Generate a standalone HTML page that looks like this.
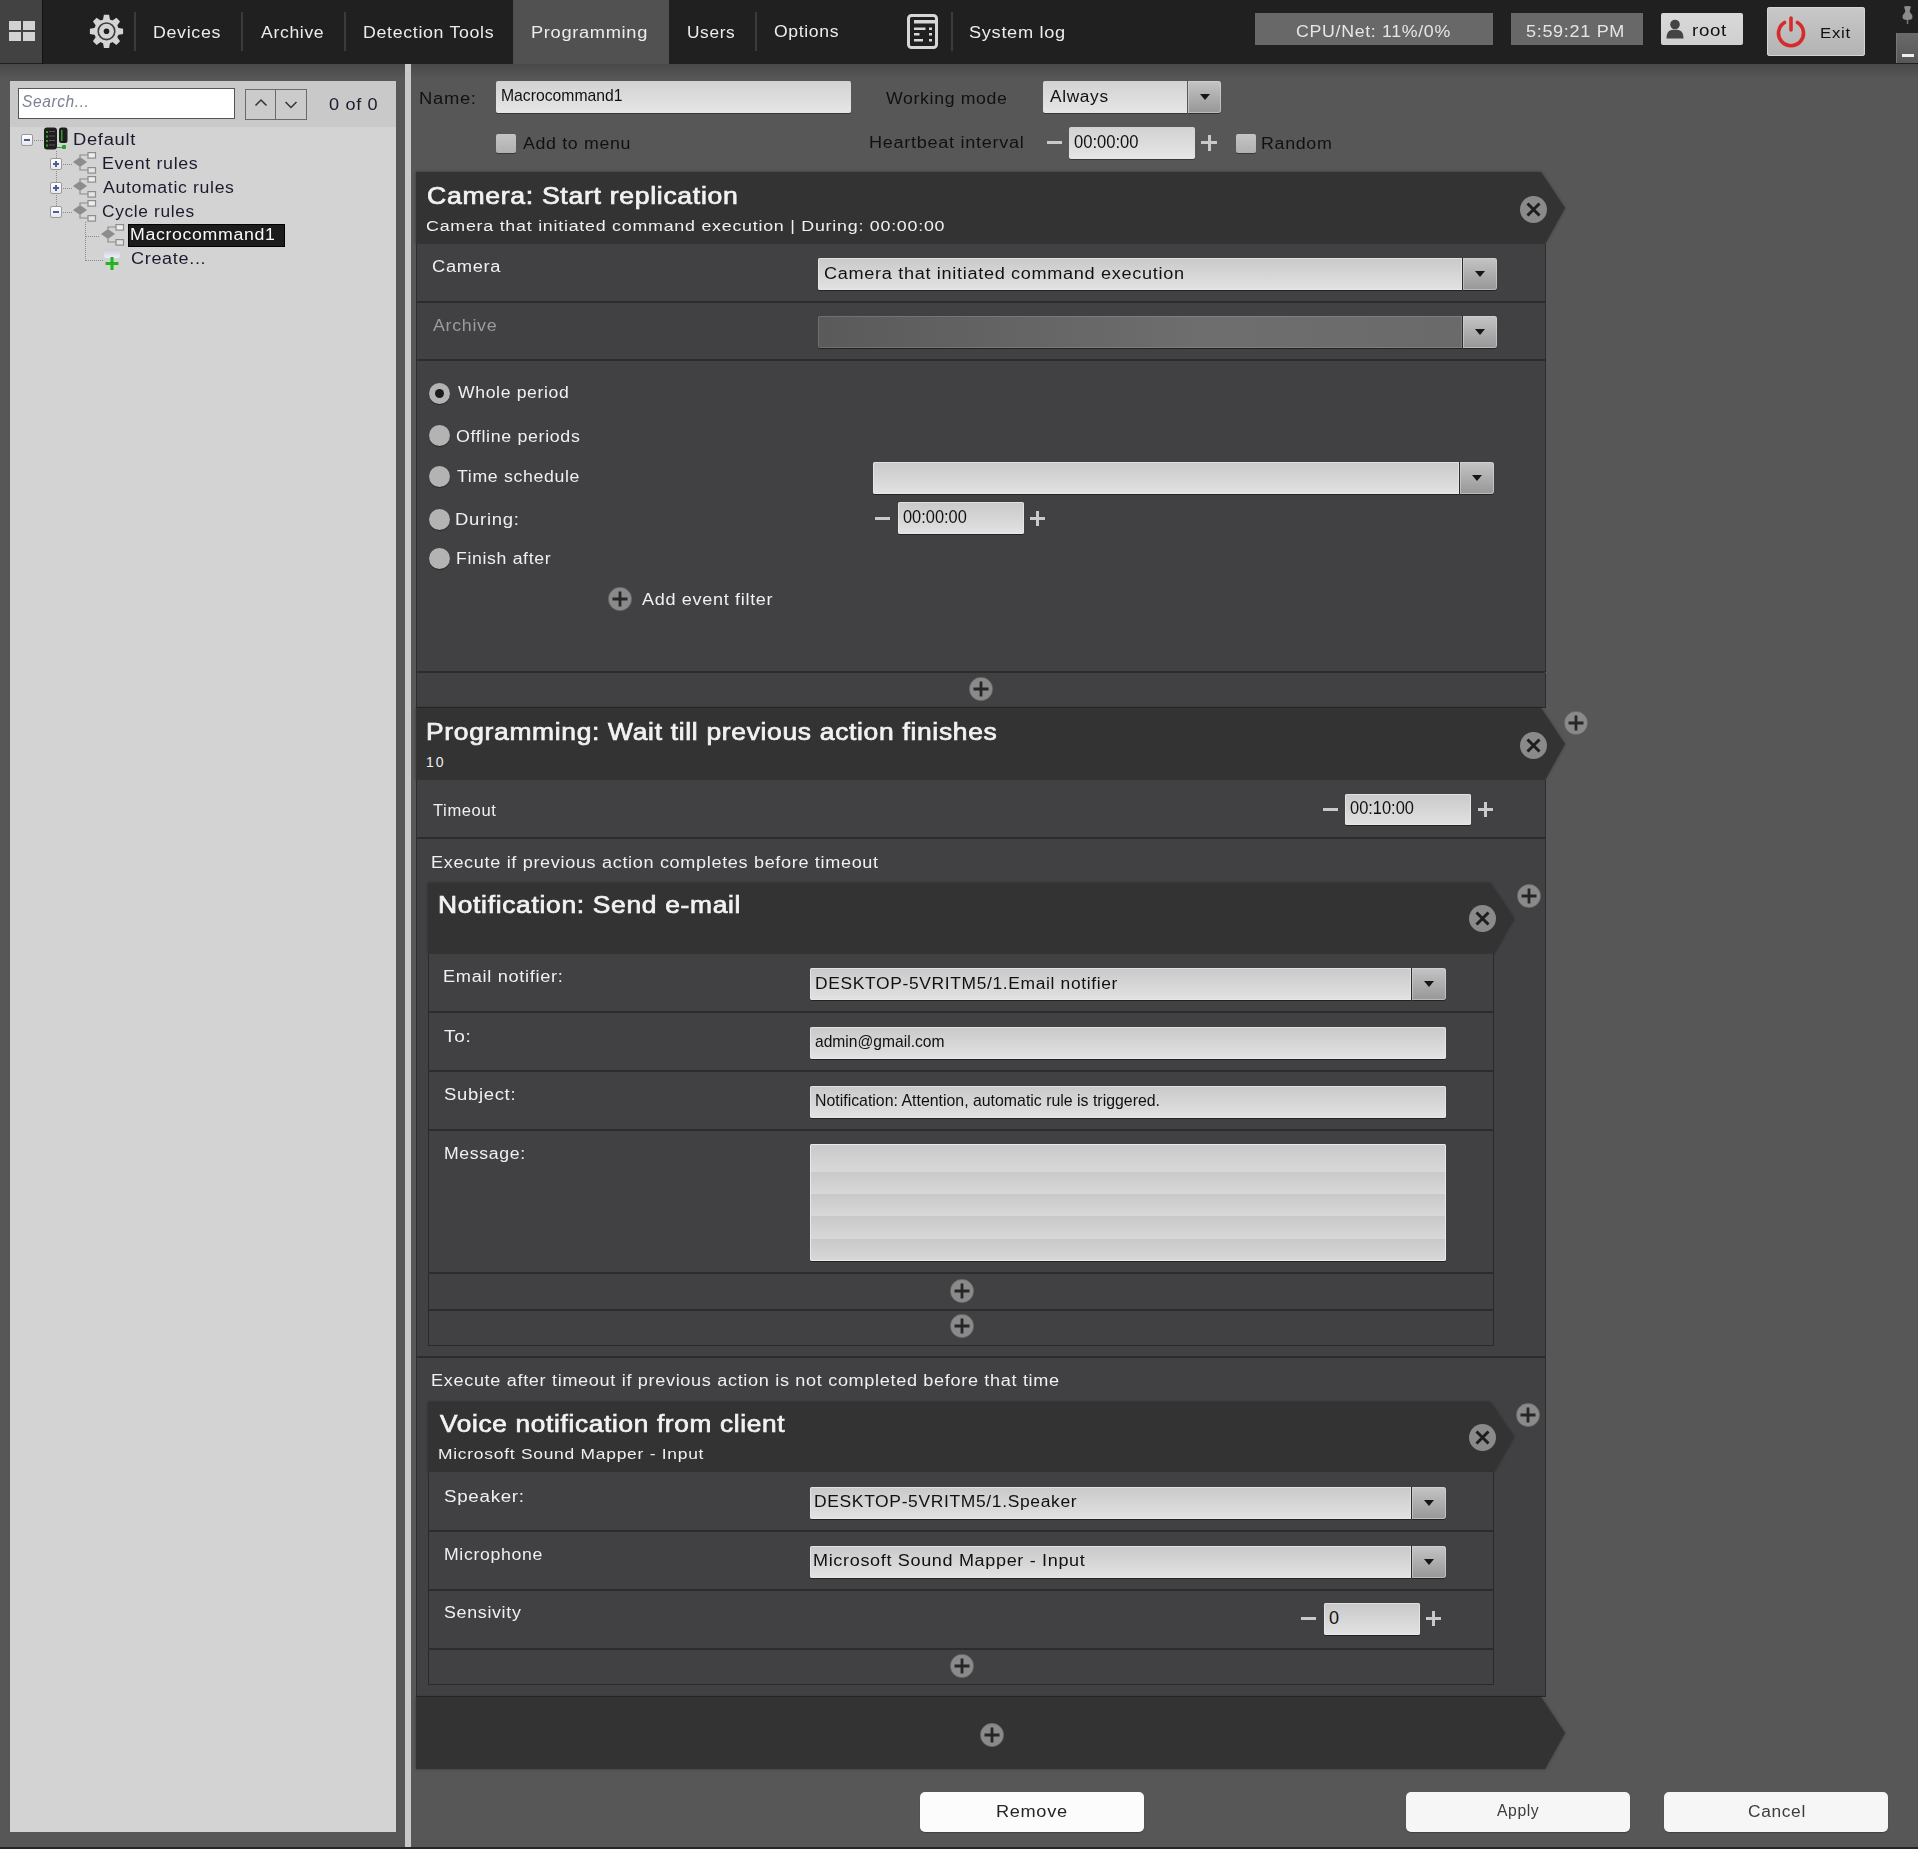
<!DOCTYPE html>
<html><head><meta charset="utf-8"><style>
*{box-sizing:border-box;margin:0;padding:0}
html,body{width:1918px;height:1849px;overflow:hidden;background:#575757;font-family:"Liberation Sans",sans-serif;}
.a{position:absolute}
.tx{position:absolute;white-space:nowrap;line-height:30px}
.t{position:absolute;white-space:nowrap;font-size:16px;letter-spacing:1.5px;line-height:20px;color:#f0f0f0}
.nav{position:absolute;white-space:nowrap;font-size:16px;letter-spacing:1.6px;line-height:20px;color:#ededed}
.dk{position:absolute;white-space:nowrap;font-size:16px;letter-spacing:1.5px;line-height:20px;color:#141414}
.title{position:absolute;white-space:nowrap;font-weight:bold;font-size:23px;letter-spacing:1.5px;color:#f5f5f5;line-height:26px}
.sub{position:absolute;white-space:nowrap;font-size:15px;letter-spacing:2px;color:#f0f0f0;line-height:18px}
.it{position:absolute;white-space:nowrap;font-size:16px;letter-spacing:0px;line-height:20px;color:#111}
.inp{position:absolute;background:linear-gradient(#cbcbcb,#e3e3e3);border-radius:2px;box-shadow:0 1px 0 rgba(0,0,0,.45), inset 0 1px 0 rgba(255,255,255,.35)}
.ddb{position:absolute;background:linear-gradient(#c4c4c4,#979797);border-radius:0 3px 3px 0;box-shadow:0 1px 0 rgba(0,0,0,.45), inset 0 0 0 1px rgba(215,215,215,.55)}
.ddb:after{content:"";position:absolute;left:50%;top:50%;margin-left:-5px;margin-top:-3px;border-left:5px solid transparent;border-right:5px solid transparent;border-top:6px solid #161616}
.btn{position:absolute;background:#f7f7f7;border-radius:4px;color:#222;font-size:16px;letter-spacing:1px;text-align:center;line-height:39px}
.radio{position:absolute;width:21px;height:21px;border-radius:50%;background:#b3b3b3;box-shadow:0 1px 1px rgba(0,0,0,.4)}
.circ{position:absolute;border-radius:50%;background:#8b8b8b}
</style></head><body>
<div class="a" style="left:0px;top:0px;width:1918px;height:64px;background:#202020"></div>
<div class="a" style="left:0px;top:0px;width:42px;height:63px;background:#424242"></div>
<div class="a" style="left:42px;top:0px;width:1px;height:64px;background:#111"></div>
<div class="a" style="left:9px;top:21px;width:12px;height:9px;background:#d2d2d2"></div>
<div class="a" style="left:9px;top:31.5px;width:12px;height:9px;background:#d2d2d2"></div>
<div class="a" style="left:22.5px;top:21px;width:12px;height:9px;background:#d2d2d2"></div>
<div class="a" style="left:22.5px;top:31.5px;width:12px;height:9px;background:#d2d2d2"></div>
<svg class="a" style="left:88px;top:13px" width="37" height="37" viewBox="0 0 37 37">
<defs><path id="tooth" d="M-3.6 -11 L-2.6 -16.6 L2.6 -16.6 L3.6 -11 Z"/></defs>
<g fill="#d4d4d4" transform="translate(18.5 18.3)">
<circle r="12.3"/>
<use href="#tooth"/><use href="#tooth" transform="rotate(45)"/><use href="#tooth" transform="rotate(90)"/><use href="#tooth" transform="rotate(135)"/>
<use href="#tooth" transform="rotate(180)"/><use href="#tooth" transform="rotate(225)"/><use href="#tooth" transform="rotate(270)"/><use href="#tooth" transform="rotate(315)"/>
<circle r="8.3" fill="none" stroke="#3c3c3c" stroke-width="1.6"/>
<circle r="2.8" fill="#1e1e1e"/>
</g>
</svg>
<div class="a" style="left:134px;top:12px;width:2px;height:39px;background:#3b3b3b"></div>
<div class="a" style="left:241px;top:12px;width:2px;height:39px;background:#3b3b3b"></div>
<div class="a" style="left:344px;top:12px;width:2px;height:39px;background:#3b3b3b"></div>
<div class="a" style="left:513px;top:0px;width:156px;height:64px;background:#515151"></div>
<div class="a" style="left:755px;top:12px;width:2px;height:39px;background:#3b3b3b"></div>
<div class="a" style="left:951px;top:12px;width:2px;height:39px;background:#3b3b3b"></div>
<div class="tx" style="left:153.0px;top:17.5px;font:16px &quot;Liberation Sans&quot;;line-height:30px;color:#ececec;letter-spacing:0.6px;transform:scaleX(1.1136);transform-origin:0 0;">Devices</div>
<div class="tx" style="left:261.0px;top:17.5px;font:16px &quot;Liberation Sans&quot;;line-height:30px;color:#ececec;letter-spacing:0.6px;transform:scaleX(1.1);transform-origin:0 0;">Archive</div>
<div class="tx" style="left:362.6px;top:17.5px;font:16px &quot;Liberation Sans&quot;;line-height:30px;color:#ececec;letter-spacing:0.6px;transform:scaleX(1.1112);transform-origin:0 0;">Detection Tools</div>
<div class="tx" style="left:531.2px;top:17.5px;font:16px &quot;Liberation Sans&quot;;line-height:30px;color:#ececec;letter-spacing:0.6px;transform:scaleX(1.14);transform-origin:0 0;">Programming</div>
<div class="tx" style="left:686.7px;top:17.5px;font:16px &quot;Liberation Sans&quot;;line-height:30px;color:#ececec;letter-spacing:0.6px;transform:scaleX(1.0791);transform-origin:0 0;">Users</div>
<div class="tx" style="left:773.8px;top:17.0px;font:16px &quot;Liberation Sans&quot;;line-height:30px;color:#ececec;letter-spacing:0.6px;transform:scaleX(1.0982);transform-origin:0 0;">Options</div>
<div class="tx" style="left:968.9px;top:17.5px;font:16px &quot;Liberation Sans&quot;;line-height:30px;color:#ececec;letter-spacing:0.6px;transform:scaleX(1.1373);transform-origin:0 0;">System log</div>
<svg class="a" style="left:906px;top:14px" width="33" height="35" viewBox="0 0 33 35">
<rect x="2.5" y="1.5" width="28" height="32" rx="3" fill="none" stroke="#d6d6d6" stroke-width="3"/>
<rect x="8" y="6" width="21" height="3.5" fill="#d6d6d6"/>
<rect x="8" y="13.5" width="11.5" height="2.5" fill="#d6d6d6"/><rect x="23" y="13.5" width="3" height="2.5" fill="#d6d6d6"/>
<rect x="8" y="19" width="5.5" height="2.5" fill="#d6d6d6"/><rect x="23" y="19" width="3" height="2.5" fill="#d6d6d6"/>
<rect x="8" y="25" width="9" height="2.5" fill="#d6d6d6"/><rect x="23" y="25" width="3" height="2.5" fill="#d6d6d6"/>
</svg>
<div class="a" style="left:1255px;top:13px;width:238px;height:32px;background:#686868"></div>
<div class="tx" style="left:1296.0px;top:17.2px;font:16px &quot;Liberation Sans&quot;;line-height:30px;color:#e6e6e6;letter-spacing:0.6px;transform:scaleX(1.1109);transform-origin:0 0;">CPU/Net: 11%/0%</div>
<div class="a" style="left:1511px;top:13px;width:132px;height:32px;background:#686868"></div>
<div class="tx" style="left:1526.4px;top:17.2px;font:16px &quot;Liberation Sans&quot;;line-height:30px;color:#e6e6e6;letter-spacing:0.6px;transform:scaleX(1.1282);transform-origin:0 0;">5:59:21 PM</div>
<div class="a" style="left:1661px;top:13px;width:82px;height:32px;background:linear-gradient(#d9d9d9,#cfcfcf);border-radius:2px"></div>
<svg class="a" style="left:1666px;top:19px" width="18" height="20" viewBox="0 0 18 20">
<circle cx="9" cy="5.5" r="4.8" fill="#444"/><path d="M0.5 19.5 C0.5 12 4 10.8 9 10.8 C14 10.8 17.5 12 17.5 19.5 Z" fill="#444"/></svg>
<div class="tx" style="left:1691.6px;top:16.2px;font:16px &quot;Liberation Sans&quot;;line-height:30px;color:#111;letter-spacing:0.6px;transform:scaleX(1.1679);transform-origin:0 0;">root</div>
<div class="a" style="left:1767px;top:7px;width:98px;height:49px;background:linear-gradient(#c8c8c8,#b3b3b3);border-radius:3px;box-shadow:inset 0 0 0 1px #d4d4d4"></div>
<svg class="a" style="left:1774px;top:15px" width="34" height="34" viewBox="0 0 34 34">
<path d="M10.5 7.5 A12.5 12.5 0 1 0 23.5 7.5" fill="none" stroke="#d42c2c" stroke-width="3.6" stroke-linecap="round"/>
<line x1="17" y1="3" x2="17" y2="15" stroke="#d42c2c" stroke-width="3.6" stroke-linecap="round"/></svg>
<div class="tx" style="left:1819.9px;top:18.4px;font:14px &quot;Liberation Sans&quot;;line-height:30px;color:#111;letter-spacing:0.6px;transform:scaleX(1.2);transform-origin:0 0;">Exit</div>
<svg class="a" style="left:1900px;top:5px" width="15" height="20" viewBox="0 0 15 20">
<path d="M4 1.5 Q7.5 0.5 11 1.5 L10 5 Q9 6 10.5 8 Q13 10 12.5 12.5 Q12 15 7.5 15 Q3 15 2.5 12.5 Q2 10 4.5 8 Q6 6 5 5 Z" fill="#8c8c8c"/>
<rect x="6.8" y="15" width="1.4" height="4" fill="#7a7a7a"/></svg>
<div class="a" style="left:1896px;top:33px;width:22px;height:30px;background:linear-gradient(#6a6a6a,#575757);box-shadow:inset 1px 0 0 #777"></div>
<div class="a" style="left:1902px;top:54px;width:12px;height:3px;background:#eee"></div>
<div class="a" style="left:0px;top:64px;width:1918px;height:15px;background:linear-gradient(rgba(0,0,0,.16),rgba(0,0,0,0))"></div>
<div class="a" style="left:10px;top:81px;width:386px;height:1751px;background:#d3d3d3"></div>
<div class="a" style="left:10px;top:81px;width:386px;height:46px;background:#c9c9c9"></div>
<div class="a" style="left:405px;top:64px;width:6px;height:1785px;background:#c9c9c9"></div>
<div class="a" style="left:18px;top:88px;width:217px;height:31px;background:#fff;border:1px solid #555"></div>
<div class="tx" style="left:21.7px;top:86.6px;font:italic 16px &quot;Liberation Sans&quot;;line-height:30px;color:#7d8290;letter-spacing:0.6px;transform:scaleX(0.9712);transform-origin:0 0;">Search...</div>
<div class="a" style="left:245px;top:89px;width:31px;height:31px;background:#cbcbcb;border:1px solid #6a6a6a"></div>
<div class="a" style="left:275px;top:89px;width:32px;height:31px;background:#cbcbcb;border:1px solid #6a6a6a"></div>
<svg class="a" style="left:254px;top:98px" width="14" height="10" viewBox="0 0 14 10"><path d="M1.5 7.5 L7 2 L12.5 7.5" fill="none" stroke="#333" stroke-width="1.5"/></svg>
<svg class="a" style="left:284px;top:100px" width="14" height="10" viewBox="0 0 14 10"><path d="M1.5 2 L7 7.5 L12.5 2" fill="none" stroke="#333" stroke-width="1.5"/></svg>
<div class="tx" style="left:328.7px;top:89.5px;font:16px &quot;Liberation Sans&quot;;line-height:30px;color:#1b1b2e;letter-spacing:0.6px;transform:scaleX(1.131);transform-origin:0 0;">0 of 0</div>
<div class="a" style="left:21px;top:134px;width:12px;height:12px;border:1px solid #9a9a9a;border-radius:2px;background:linear-gradient(#fff,#e8e8e8)"></div>
<div class="a" style="left:24px;top:139px;width:6px;height:2px;background:#4b5b9b"></div>
<div class="a" style="left:34px;top:140px;width:10px;height:1px;background:repeating-linear-gradient(90deg,#8a8a8a 0 1px,transparent 1px 2px)"></div>
<svg class="a" style="left:43px;top:127px" width="26" height="24" viewBox="0 0 26 24">
<rect x="1" y="0.5" width="13" height="22" rx="3" fill="#1e1e1e"/>
<rect x="16" y="0.5" width="8.5" height="15.5" rx="2.5" fill="#1e1e1e"/>
<g fill="#2aa02a"><rect x="3" y="4" width="2" height="2"/><rect x="3" y="8.5" width="2" height="2"/><rect x="3" y="13" width="2" height="2"/><rect x="3" y="17.5" width="2" height="2"/>
<rect x="18" y="3" width="1.5" height="11"/><rect x="19" y="18" width="4" height="4" rx="1"/></g>
<g fill="#555"><rect x="6" y="4" width="6" height="1"/><rect x="6" y="8.5" width="6" height="1"/><rect x="6" y="13" width="6" height="1"/><rect x="6" y="17.5" width="6" height="1"/></g>
<rect x="14" y="20" width="5" height="1" fill="#2aa02a"/>
</svg>
<div class="tx" style="left:72.6px;top:124.5px;font:16px &quot;Liberation Sans&quot;;line-height:30px;color:#1b1b30;letter-spacing:0.6px;transform:scaleX(1.1472);transform-origin:0 0;">Default</div>
<div class="a" style="left:56px;top:151px;width:1px;height:55px;background:repeating-linear-gradient(#8a8a8a 0 1px,transparent 1px 2px)"></div>
<div class="a" style="left:50px;top:158px;width:12px;height:12px;border:1px solid #9a9a9a;border-radius:2px;background:linear-gradient(#fff,#e8e8e8)"></div>
<div class="a" style="left:53px;top:163px;width:6px;height:2px;background:#4b5b9b"></div>
<div class="a" style="left:55px;top:161px;width:2px;height:6px;background:#4b5b9b"></div>
<div class="a" style="left:63px;top:164px;width:10px;height:1px;background:repeating-linear-gradient(90deg,#8a8a8a 0 1px,transparent 1px 2px)"></div>
<svg class="a" style="left:73px;top:152px" width="24" height="22" viewBox="0 0 24 22">
<path d="M0 10 L7 5 L14 10 L7 15 Z" fill="#8c8c8c"/>
<path d="M7 5 V3 H15 M7 15 V18 H15" fill="none" stroke="#8c8c8c" stroke-width="1.2"/>
<rect x="15" y="0.6" width="7.5" height="5.5" fill="#eee" stroke="#8c8c8c" stroke-width="1.2"/>
<rect x="15" y="15.6" width="7.5" height="5.5" fill="#e4e4e4" stroke="#8c8c8c" stroke-width="1.2"/>
</svg>
<div class="tx" style="left:102.2px;top:149.1px;font:16px &quot;Liberation Sans&quot;;line-height:30px;color:#1b1b30;letter-spacing:0.6px;transform:scaleX(1.1131);transform-origin:0 0;">Event rules</div>
<div class="a" style="left:50px;top:182px;width:12px;height:12px;border:1px solid #9a9a9a;border-radius:2px;background:linear-gradient(#fff,#e8e8e8)"></div>
<div class="a" style="left:53px;top:187px;width:6px;height:2px;background:#4b5b9b"></div>
<div class="a" style="left:55px;top:185px;width:2px;height:6px;background:#4b5b9b"></div>
<div class="a" style="left:63px;top:188px;width:10px;height:1px;background:repeating-linear-gradient(90deg,#8a8a8a 0 1px,transparent 1px 2px)"></div>
<svg class="a" style="left:73px;top:176px" width="24" height="22" viewBox="0 0 24 22">
<path d="M0 10 L7 5 L14 10 L7 15 Z" fill="#8c8c8c"/>
<path d="M7 5 V3 H15 M7 15 V18 H15" fill="none" stroke="#8c8c8c" stroke-width="1.2"/>
<rect x="15" y="0.6" width="7.5" height="5.5" fill="#eee" stroke="#8c8c8c" stroke-width="1.2"/>
<rect x="15" y="15.6" width="7.5" height="5.5" fill="#e4e4e4" stroke="#8c8c8c" stroke-width="1.2"/>
</svg>
<div class="tx" style="left:103.2px;top:173.2px;font:16px &quot;Liberation Sans&quot;;line-height:30px;color:#1b1b30;letter-spacing:0.6px;transform:scaleX(1.1034);transform-origin:0 0;">Automatic rules</div>
<div class="a" style="left:50px;top:206px;width:12px;height:12px;border:1px solid #9a9a9a;border-radius:2px;background:linear-gradient(#fff,#e8e8e8)"></div>
<div class="a" style="left:53px;top:211px;width:6px;height:2px;background:#4b5b9b"></div>
<div class="a" style="left:63px;top:212px;width:10px;height:1px;background:repeating-linear-gradient(90deg,#8a8a8a 0 1px,transparent 1px 2px)"></div>
<svg class="a" style="left:73px;top:200px" width="24" height="22" viewBox="0 0 24 22">
<path d="M0 10 L7 5 L14 10 L7 15 Z" fill="#8c8c8c"/>
<path d="M7 5 V3 H15 M7 15 V18 H15" fill="none" stroke="#8c8c8c" stroke-width="1.2"/>
<rect x="15" y="0.6" width="7.5" height="5.5" fill="#eee" stroke="#8c8c8c" stroke-width="1.2"/>
<rect x="15" y="15.6" width="7.5" height="5.5" fill="#e4e4e4" stroke="#8c8c8c" stroke-width="1.2"/>
</svg>
<div class="tx" style="left:102.2px;top:197.3px;font:16px &quot;Liberation Sans&quot;;line-height:30px;color:#1b1b30;letter-spacing:0.6px;transform:scaleX(1.0821);transform-origin:0 0;">Cycle rules</div>
<div class="a" style="left:85px;top:222px;width:1px;height:39px;background:repeating-linear-gradient(#8a8a8a 0 1px,transparent 1px 2px)"></div>
<div class="a" style="left:86px;top:236px;width:14px;height:1px;background:repeating-linear-gradient(90deg,#8a8a8a 0 1px,transparent 1px 2px)"></div>
<svg class="a" style="left:101px;top:224px" width="24" height="22" viewBox="0 0 24 22">
<path d="M0 10 L7 5 L14 10 L7 15 Z" fill="#8c8c8c"/>
<path d="M7 5 V3 H15 M7 15 V18 H15" fill="none" stroke="#8c8c8c" stroke-width="1.2"/>
<rect x="15" y="0.6" width="7.5" height="5.5" fill="#eee" stroke="#8c8c8c" stroke-width="1.2"/>
<rect x="15" y="15.6" width="7.5" height="5.5" fill="#e4e4e4" stroke="#8c8c8c" stroke-width="1.2"/>
</svg>
<div class="a" style="left:128px;top:224px;width:157px;height:23px;background:#1c1c1c;box-shadow:inset 0 0 0 1px #000"></div>
<div class="tx" style="left:130.4px;top:219.7px;font:16px &quot;Liberation Sans&quot;;line-height:30px;color:#fafafa;letter-spacing:0.6px;transform:scaleX(1.107);transform-origin:0 0;">Macrocommand1</div>
<div class="a" style="left:86px;top:260px;width:18px;height:1px;background:repeating-linear-gradient(90deg,#8a8a8a 0 1px,transparent 1px 2px)"></div>
<div class="a" style="left:104px;top:249px;width:16px;height:9px;background:linear-gradient(#c9cbd6,#eef0f8);border-radius:2px"></div>
<svg class="a" style="left:105px;top:257px" width="14" height="13" viewBox="0 0 14 13"><path d="M5.5 0h3v5h5v3h-5v5h-3v-5h-5v-3h5z" fill="#1fb51f"/></svg>
<div class="tx" style="left:131.0px;top:244.3px;font:16px &quot;Liberation Sans&quot;;line-height:30px;color:#1b1b30;letter-spacing:0.6px;transform:scaleX(1.1281);transform-origin:0 0;">Create...</div>
<div class="tx" style="left:419.0px;top:83.8px;font:16px &quot;Liberation Sans&quot;;line-height:30px;color:#111;letter-spacing:0.6px;transform:scaleX(1.1489);transform-origin:0 0;">Name:</div>
<div class="a" style="left:496px;top:81px;width:355px;height:32px;background:linear-gradient(#d2d2d2,#e6e6e6);border-radius:2px;box-shadow:0 1px 0 rgba(0,0,0,.35)"></div>
<div class="tx" style="left:501.3px;top:81.0px;font:17px &quot;Liberation Sans&quot;;line-height:30px;color:#111;letter-spacing:0px;transform:scaleX(0.9248);transform-origin:0 0;">Macrocommand1</div>
<div class="tx" style="left:886.4px;top:83.7px;font:16px &quot;Liberation Sans&quot;;line-height:30px;color:#111;letter-spacing:0.6px;transform:scaleX(1.1046);transform-origin:0 0;">Working mode</div>
<div class="a" style="left:1043px;top:81px;width:144px;height:32px;background:linear-gradient(#d2d2d2,#e6e6e6);border-radius:2px 0 0 2px;box-shadow:0 1px 0 rgba(0,0,0,.35)"></div>
<div class="tx" style="left:1049.9px;top:82.4px;font:16px &quot;Liberation Sans&quot;;line-height:30px;color:#111;letter-spacing:0.6px;transform:scaleX(1.0811);transform-origin:0 0;">Always</div>
<div class="ddb" style="left:1188px;top:81px;width:33px;height:32px"></div>
<div class="a" style="left:496px;top:134px;width:20px;height:19px;background:linear-gradient(#c4c4c4,#b0b0b0);border-radius:2px;box-shadow:0 1px 0 rgba(0,0,0,.35)"></div>
<div class="tx" style="left:523.4px;top:129.2px;font:16px &quot;Liberation Sans&quot;;line-height:30px;color:#111;letter-spacing:0.6px;transform:scaleX(1.1104);transform-origin:0 0;">Add to menu</div>
<div class="tx" style="left:868.8px;top:128.0px;font:16px &quot;Liberation Sans&quot;;line-height:30px;color:#111;letter-spacing:0.6px;transform:scaleX(1.1333);transform-origin:0 0;">Heartbeat interval</div>
<div class="a" style="left:1047px;top:141px;width:15px;height:3px;background:#c9c9c9"></div>
<div class="a" style="left:1069px;top:127px;width:126px;height:32px;background:linear-gradient(#d2d2d2,#e6e6e6);border-radius:2px;box-shadow:0 1px 0 rgba(0,0,0,.35)"></div>
<div class="tx" style="left:1073.6px;top:127.3px;font:18px &quot;Liberation Sans&quot;;line-height:30px;color:#111;letter-spacing:0px;transform:scaleX(0.9206);transform-origin:0 0;">00:00:00</div>
<div class="a" style="left:1201px;top:141px;width:16px;height:3px;background:#c9c9c9"></div>
<div class="a" style="left:1207.5px;top:134.5px;width:3px;height:16px;background:#c9c9c9"></div>
<div class="a" style="left:1236px;top:134px;width:20px;height:19px;background:linear-gradient(#c4c4c4,#b0b0b0);border-radius:2px;box-shadow:0 1px 0 rgba(0,0,0,.35)"></div>
<div class="tx" style="left:1261.3px;top:128.8px;font:16px &quot;Liberation Sans&quot;;line-height:30px;color:#111;letter-spacing:0.6px;transform:scaleX(1.1145);transform-origin:0 0;">Random</div>
<svg class="a" style="left:416px;top:172px;overflow:visible" width="1153" height="72" viewBox="0 0 1153 72"><path d="M0 0 H1125 L1149 36.0 L1129 72 H0 Z" fill="#333333" style="filter:drop-shadow(0 0 1.5px rgba(0,0,0,.35))"/></svg>
<div class="tx" style="left:427.3px;top:181.2px;font:23px &quot;Liberation Sans&quot;;line-height:30px;color:#f2f2f2;letter-spacing:0.6px;transform:scaleX(1.1564);transform-origin:0 0;-webkit-text-stroke:0.7px #f2f2f2;">Camera: Start replication</div>
<div class="tx" style="left:426.4px;top:211.2px;font:14px &quot;Liberation Sans&quot;;line-height:30px;color:#f0f0f0;letter-spacing:0.6px;transform:scaleX(1.2724);transform-origin:0 0;">Camera that initiated command execution | During: 00:00:00</div>
<svg class="a" style="left:1518.5px;top:194.5px" width="29.0" height="29.0" viewBox="0 0 29.0 29.0"><circle cx="14.5" cy="14.5" r="13.5" fill="#8a8a8a"/><path d="M8.5 8.5 L20.5 20.5 M20.5 8.5 L8.5 20.5" stroke="#1e1e1e" stroke-width="3"/></svg>
<div class="a" style="left:416px;top:244px;width:1130px;height:428px;background:#414143;border-left:1px solid #2d2d30;border-right:1px solid #2d2d30"></div>
<div class="tx" style="left:431.5px;top:252.4px;font:16px &quot;Liberation Sans&quot;;line-height:30px;color:#f0f0f0;letter-spacing:0.6px;transform:scaleX(1.1441);transform-origin:0 0;">Camera</div>
<div class="a" style="left:1461px;top:258px;width:2px;height:32px;background:#2c2c2c"></div>
<div class="a" style="left:818px;top:258px;width:644px;height:32px;background:linear-gradient(#c9c9c9,#e2e2e2);border-radius:2px 0 0 2px;box-shadow:0 1px 0 rgba(0,0,0,.45), inset 0 0 0 1px rgba(235,235,235,.7)"></div>
<div class="ddb" style="left:1463px;top:258px;width:34px;height:32px"></div>
<div class="tx" style="left:823.6px;top:258.5px;font:16px &quot;Liberation Sans&quot;;line-height:30px;color:#111;letter-spacing:0.6px;transform:scaleX(1.132);transform-origin:0 0;">Camera that initiated command execution</div>
<div class="a" style="left:416px;top:301px;width:1129px;height:2px;background:#2c2c2f"></div>
<div class="tx" style="left:432.5px;top:310.8px;font:16px &quot;Liberation Sans&quot;;line-height:30px;color:#9c9c9c;letter-spacing:0.6px;transform:scaleX(1.1161);transform-origin:0 0;">Archive</div>
<div class="a" style="left:1461px;top:316px;width:2px;height:32px;background:#2c2c2c"></div>
<div class="a" style="left:818px;top:316px;width:644px;height:32px;background:linear-gradient(90deg,#5a5a5a,#6e6e6e 60%,#6a6a6a);border-radius:2px 0 0 2px;box-shadow:0 1px 0 rgba(0,0,0,.45), inset 0 0 0 1px rgba(235,235,235,.15)"></div>
<div class="ddb" style="left:1463px;top:316px;width:34px;height:32px"></div>
<div class="a" style="left:416px;top:359px;width:1129px;height:2px;background:#2c2c2f"></div>
<div class="radio" style="left:429px;top:383px"></div>
<div class="a" style="left:435px;top:389px;width:9px;height:9px;background:#1c1c1c;border-radius:50%"></div>
<div class="tx" style="left:457.6px;top:378.2px;font:16px &quot;Liberation Sans&quot;;line-height:30px;color:#f0f0f0;letter-spacing:0.6px;transform:scaleX(1.098);transform-origin:0 0;">Whole period</div>
<div class="radio" style="left:429px;top:425px"></div>
<div class="tx" style="left:455.9px;top:421.5px;font:16px &quot;Liberation Sans&quot;;line-height:30px;color:#f0f0f0;letter-spacing:0.6px;transform:scaleX(1.1127);transform-origin:0 0;">Offline periods</div>
<div class="radio" style="left:429px;top:466px"></div>
<div class="tx" style="left:456.6px;top:461.5px;font:16px &quot;Liberation Sans&quot;;line-height:30px;color:#f0f0f0;letter-spacing:0.6px;transform:scaleX(1.1055);transform-origin:0 0;">Time schedule</div>
<div class="radio" style="left:429px;top:509px"></div>
<div class="tx" style="left:454.9px;top:504.8px;font:16px &quot;Liberation Sans&quot;;line-height:30px;color:#f0f0f0;letter-spacing:0.6px;transform:scaleX(1.1566);transform-origin:0 0;">During:</div>
<div class="radio" style="left:429px;top:548px"></div>
<div class="tx" style="left:455.9px;top:543.7px;font:16px &quot;Liberation Sans&quot;;line-height:30px;color:#f0f0f0;letter-spacing:0.6px;transform:scaleX(1.1035);transform-origin:0 0;">Finish after</div>
<div class="a" style="left:1458px;top:462px;width:2px;height:32px;background:#2c2c2c"></div>
<div class="a" style="left:873px;top:462px;width:586px;height:32px;background:linear-gradient(#c9c9c9,#e2e2e2);border-radius:2px 0 0 2px;box-shadow:0 1px 0 rgba(0,0,0,.45), inset 0 0 0 1px rgba(235,235,235,.7)"></div>
<div class="ddb" style="left:1460px;top:462px;width:34px;height:32px"></div>
<div class="a" style="left:875px;top:517px;width:15px;height:3px;background:#c9c9c9"></div>
<div class="a" style="left:1030px;top:517px;width:15px;height:3px;background:#c9c9c9"></div>
<div class="a" style="left:1036px;top:511px;width:3px;height:15px;background:#c9c9c9"></div>
<div class="a" style="left:898px;top:502px;width:126px;height:32px;background:linear-gradient(#c9c9c9,#e2e2e2);border-radius:2px;box-shadow:0 1px 0 rgba(0,0,0,.45), inset 0 0 0 1px rgba(235,235,235,.7)"></div>
<div class="tx" style="left:903.3px;top:501.7px;font:18px &quot;Liberation Sans&quot;;line-height:30px;color:#111;letter-spacing:0px;transform:scaleX(0.9103);transform-origin:0 0;">00:00:00</div>
<svg class="a" style="left:606.7px;top:585.5px" width="26" height="26" viewBox="0 0 26 26"><circle cx="13" cy="13" r="11.7" fill="#8a8a8a" stroke="#5a5a5a" stroke-width="0.6"/><path d="M5.5 13 H20.5 M13 5.5 V20.5" stroke="#262626" stroke-width="2.8"/></svg>
<div class="tx" style="left:641.6px;top:585.0px;font:16px &quot;Liberation Sans&quot;;line-height:30px;color:#f0f0f0;letter-spacing:0.6px;transform:scaleX(1.1284);transform-origin:0 0;">Add event filter</div>
<div class="a" style="left:416px;top:671px;width:1129px;height:2px;background:#2c2c2f"></div>
<div class="a" style="left:416px;top:673px;width:1130px;height:35px;background:#414143;border-left:1px solid #2d2d30;border-right:1px solid #2d2d30;border-bottom:1px solid #2b2b2e"></div>
<svg class="a" style="left:968px;top:676px" width="26" height="26" viewBox="0 0 26 26"><circle cx="13" cy="13" r="11.7" fill="#8a8a8a" stroke="#5a5a5a" stroke-width="0.6"/><path d="M5.5 13 H20.5 M13 5.5 V20.5" stroke="#262626" stroke-width="2.8"/></svg>
<svg class="a" style="left:416px;top:708px;overflow:visible" width="1153" height="72" viewBox="0 0 1153 72"><path d="M0 0 H1125 L1149 36.0 L1129 72 H0 Z" fill="#333333" style="filter:drop-shadow(0 0 1.5px rgba(0,0,0,.35))"/></svg>
<div class="tx" style="left:425.8px;top:716.9px;font:23px &quot;Liberation Sans&quot;;line-height:30px;color:#f2f2f2;letter-spacing:0.6px;transform:scaleX(1.148);transform-origin:0 0;-webkit-text-stroke:0.7px #f2f2f2;">Programming: Wait till previous action finishes</div>
<div class="tx" style="left:425.9px;top:746.9px;font:14px &quot;Liberation Sans&quot;;line-height:30px;color:#f0f0f0;letter-spacing:2px;">10</div>
<svg class="a" style="left:1518.5px;top:730.5px" width="29.0" height="29.0" viewBox="0 0 29.0 29.0"><circle cx="14.5" cy="14.5" r="13.5" fill="#8a8a8a"/><path d="M8.5 8.5 L20.5 20.5 M20.5 8.5 L8.5 20.5" stroke="#1e1e1e" stroke-width="3"/></svg>
<svg class="a" style="left:1563px;top:710px" width="26" height="26" viewBox="0 0 26 26"><circle cx="13" cy="13" r="11.7" fill="#8a8a8a" stroke="#5a5a5a" stroke-width="0.6"/><path d="M5.5 13 H20.5 M13 5.5 V20.5" stroke="#262626" stroke-width="2.8"/></svg>
<div class="a" style="left:416px;top:780px;width:1130px;height:917px;background:#414143;border-left:1px solid #2d2d30;border-right:1px solid #2d2d30;border-bottom:1px solid #2b2b2e"></div>
<div class="tx" style="left:432.7px;top:796.2px;font:16px &quot;Liberation Sans&quot;;line-height:30px;color:#f0f0f0;letter-spacing:0.6px;transform:scaleX(1.0328);transform-origin:0 0;">Timeout</div>
<div class="a" style="left:1323px;top:808px;width:15px;height:3px;background:#c9c9c9"></div>
<div class="a" style="left:1478px;top:808px;width:15px;height:3px;background:#c9c9c9"></div>
<div class="a" style="left:1484px;top:802px;width:3px;height:15px;background:#c9c9c9"></div>
<div class="a" style="left:1345px;top:794px;width:126px;height:31px;background:linear-gradient(#c9c9c9,#e2e2e2);border-radius:2px;box-shadow:0 1px 0 rgba(0,0,0,.45), inset 0 0 0 1px rgba(235,235,235,.7)"></div>
<div class="tx" style="left:1350.1px;top:793.2px;font:18px &quot;Liberation Sans&quot;;line-height:30px;color:#111;letter-spacing:0px;transform:scaleX(0.9118);transform-origin:0 0;">00:10:00</div>
<div class="a" style="left:416px;top:837px;width:1129px;height:2px;background:#2c2c2f"></div>
<div class="tx" style="left:430.5px;top:847.5px;font:16px &quot;Liberation Sans&quot;;line-height:30px;color:#f0f0f0;letter-spacing:0.6px;transform:scaleX(1.1278);transform-origin:0 0;">Execute if previous action completes before timeout</div>
<svg class="a" style="left:428px;top:883px;overflow:visible" width="1090" height="71" viewBox="0 0 1090 71"><path d="M0 0 H1062 L1086 35.5 L1066 71 H0 Z" fill="#333333" style="filter:drop-shadow(0 0 1.5px rgba(0,0,0,.35))"/></svg>
<div class="tx" style="left:438.4px;top:890.4px;font:23px &quot;Liberation Sans&quot;;line-height:30px;color:#f2f2f2;letter-spacing:0.6px;transform:scaleX(1.1469);transform-origin:0 0;-webkit-text-stroke:0.7px #f2f2f2;">Notification: Send e-mail</div>
<svg class="a" style="left:1467.5px;top:904.0px" width="29.0" height="29.0" viewBox="0 0 29.0 29.0"><circle cx="14.5" cy="14.5" r="13.5" fill="#8a8a8a"/><path d="M8.5 8.5 L20.5 20.5 M20.5 8.5 L8.5 20.5" stroke="#1e1e1e" stroke-width="3"/></svg>
<svg class="a" style="left:1515.5px;top:883px" width="26" height="26" viewBox="0 0 26 26"><circle cx="13" cy="13" r="11.7" fill="#8a8a8a" stroke="#5a5a5a" stroke-width="0.6"/><path d="M5.5 13 H20.5 M13 5.5 V20.5" stroke="#262626" stroke-width="2.8"/></svg>
<div class="a" style="left:428px;top:954px;width:1066px;height:392px;background:#414143;border-left:1px solid #2a2a2d;border-right:1px solid #2a2a2d;border-bottom:1px solid #2a2a2d"></div>
<div class="tx" style="left:442.6px;top:962.4px;font:16px &quot;Liberation Sans&quot;;line-height:30px;color:#f0f0f0;letter-spacing:0.6px;transform:scaleX(1.1379);transform-origin:0 0;">Email notifier:</div>
<div class="a" style="left:1410px;top:968px;width:2px;height:32px;background:#2c2c2c"></div>
<div class="a" style="left:810px;top:968px;width:601px;height:32px;background:linear-gradient(#c9c9c9,#e2e2e2);border-radius:2px 0 0 2px;box-shadow:0 1px 0 rgba(0,0,0,.45), inset 0 0 0 1px rgba(235,235,235,.7)"></div>
<div class="ddb" style="left:1412px;top:968px;width:34px;height:32px"></div>
<div class="tx" style="left:814.6px;top:969.1px;font:16px &quot;Liberation Sans&quot;;line-height:30px;color:#111;letter-spacing:0.6px;transform:scaleX(1.0881);transform-origin:0 0;">DESKTOP-5VRITM5/1.Email notifier</div>
<div class="a" style="left:428px;top:1011px;width:1066px;height:2px;background:#2c2c2f"></div>
<div class="tx" style="left:444.2px;top:1021.9px;font:16px &quot;Liberation Sans&quot;;line-height:30px;color:#f0f0f0;letter-spacing:0.6px;transform:scaleX(1.1905);transform-origin:0 0;">To:</div>
<div class="a" style="left:810px;top:1027px;width:636px;height:32px;background:linear-gradient(#c9c9c9,#e2e2e2);border-radius:2px;box-shadow:0 1px 0 rgba(0,0,0,.45), inset 0 0 0 1px rgba(235,235,235,.7)"></div>
<div class="tx" style="left:815.3px;top:1027.0px;font:17px &quot;Liberation Sans&quot;;line-height:30px;color:#111;letter-spacing:0px;transform:scaleX(0.918);transform-origin:0 0;">admin@gmail.com</div>
<div class="a" style="left:428px;top:1070px;width:1066px;height:2px;background:#2c2c2f"></div>
<div class="tx" style="left:443.6px;top:1080.3px;font:16px &quot;Liberation Sans&quot;;line-height:30px;color:#f0f0f0;letter-spacing:0.6px;transform:scaleX(1.1533);transform-origin:0 0;">Subject:</div>
<div class="a" style="left:810px;top:1086px;width:636px;height:32px;background:linear-gradient(#c9c9c9,#e2e2e2);border-radius:2px;box-shadow:0 1px 0 rgba(0,0,0,.45), inset 0 0 0 1px rgba(235,235,235,.7)"></div>
<div class="tx" style="left:814.6px;top:1085.5px;font:17px &quot;Liberation Sans&quot;;line-height:30px;color:#111;letter-spacing:0px;transform:scaleX(0.9338);transform-origin:0 0;">Notification: Attention, automatic rule is triggered.</div>
<div class="a" style="left:428px;top:1129px;width:1066px;height:2px;background:#2c2c2f"></div>
<div class="tx" style="left:443.6px;top:1138.7px;font:16px &quot;Liberation Sans&quot;;line-height:30px;color:#f0f0f0;letter-spacing:0.6px;transform:scaleX(1.1014);transform-origin:0 0;">Message:</div>
<div class="a" style="left:810px;top:1144px;width:636px;height:117px;background:linear-gradient(#c9c9c9 0px,#d8d8d8 28px,#c9c9c9 28px,#d8d8d8 50px,#c9c9c9 50px,#d8d8d8 72px,#c9c9c9 72px,#d8d8d8 95px,#c9c9c9 95px,#d8d8d8 117px);border-radius:2px;box-shadow:0 1px 0 rgba(0,0,0,.45), inset 0 0 0 1px rgba(240,240,240,.8)"></div>
<div class="a" style="left:428px;top:1272px;width:1066px;height:2px;background:#2c2c2f"></div>
<svg class="a" style="left:948.5px;top:1277.5px" width="26" height="26" viewBox="0 0 26 26"><circle cx="13" cy="13" r="11.7" fill="#8a8a8a" stroke="#5a5a5a" stroke-width="0.6"/><path d="M5.5 13 H20.5 M13 5.5 V20.5" stroke="#262626" stroke-width="2.8"/></svg>
<div class="a" style="left:428px;top:1309px;width:1066px;height:2px;background:#2c2c2f"></div>
<svg class="a" style="left:948.5px;top:1313.3px" width="26" height="26" viewBox="0 0 26 26"><circle cx="13" cy="13" r="11.7" fill="#8a8a8a" stroke="#5a5a5a" stroke-width="0.6"/><path d="M5.5 13 H20.5 M13 5.5 V20.5" stroke="#262626" stroke-width="2.8"/></svg>
<div class="a" style="left:416px;top:1356px;width:1129px;height:2px;background:#2c2c2f"></div>
<div class="tx" style="left:430.5px;top:1365.6px;font:16px &quot;Liberation Sans&quot;;line-height:30px;color:#f0f0f0;letter-spacing:0.6px;transform:scaleX(1.1295);transform-origin:0 0;">Execute after timeout if previous action is not completed before that time</div>
<svg class="a" style="left:428px;top:1402px;overflow:visible" width="1090" height="70" viewBox="0 0 1090 70"><path d="M0 0 H1062 L1086 35.0 L1066 70 H0 Z" fill="#333333" style="filter:drop-shadow(0 0 1.5px rgba(0,0,0,.35))"/></svg>
<div class="tx" style="left:440.2px;top:1409.2px;font:23px &quot;Liberation Sans&quot;;line-height:30px;color:#f2f2f2;letter-spacing:0.6px;transform:scaleX(1.1391);transform-origin:0 0;-webkit-text-stroke:0.7px #f2f2f2;">Voice notification from client</div>
<div class="tx" style="left:437.6px;top:1439.1px;font:14px &quot;Liberation Sans&quot;;line-height:30px;color:#f0f0f0;letter-spacing:0.6px;transform:scaleX(1.2434);transform-origin:0 0;">Microsoft Sound Mapper - Input</div>
<svg class="a" style="left:1467.5px;top:1422.5px" width="29.0" height="29.0" viewBox="0 0 29.0 29.0"><circle cx="14.5" cy="14.5" r="13.5" fill="#8a8a8a"/><path d="M8.5 8.5 L20.5 20.5 M20.5 8.5 L8.5 20.5" stroke="#1e1e1e" stroke-width="3"/></svg>
<svg class="a" style="left:1515px;top:1402px" width="26" height="26" viewBox="0 0 26 26"><circle cx="13" cy="13" r="11.7" fill="#8a8a8a" stroke="#5a5a5a" stroke-width="0.6"/><path d="M5.5 13 H20.5 M13 5.5 V20.5" stroke="#262626" stroke-width="2.8"/></svg>
<div class="a" style="left:428px;top:1472px;width:1066px;height:213px;background:#414143;border-left:1px solid #2a2a2d;border-right:1px solid #2a2a2d;border-bottom:1px solid #2a2a2d"></div>
<div class="tx" style="left:443.6px;top:1481.6px;font:16px &quot;Liberation Sans&quot;;line-height:30px;color:#f0f0f0;letter-spacing:0.6px;transform:scaleX(1.1727);transform-origin:0 0;">Speaker:</div>
<div class="a" style="left:1410px;top:1487px;width:2px;height:32px;background:#2c2c2c"></div>
<div class="a" style="left:810px;top:1487px;width:601px;height:32px;background:linear-gradient(#c9c9c9,#e2e2e2);border-radius:2px 0 0 2px;box-shadow:0 1px 0 rgba(0,0,0,.45), inset 0 0 0 1px rgba(235,235,235,.7)"></div>
<div class="ddb" style="left:1412px;top:1487px;width:34px;height:32px"></div>
<div class="tx" style="left:814.0px;top:1487.0px;font:16px &quot;Liberation Sans&quot;;line-height:30px;color:#111;letter-spacing:0.6px;transform:scaleX(1.0904);transform-origin:0 0;">DESKTOP-5VRITM5/1.Speaker</div>
<div class="a" style="left:428px;top:1530px;width:1066px;height:2px;background:#2c2c2f"></div>
<div class="tx" style="left:443.6px;top:1540.0px;font:16px &quot;Liberation Sans&quot;;line-height:30px;color:#f0f0f0;letter-spacing:0.6px;transform:scaleX(1.1034);transform-origin:0 0;">Microphone</div>
<div class="a" style="left:1410px;top:1546px;width:2px;height:32px;background:#2c2c2c"></div>
<div class="a" style="left:810px;top:1546px;width:601px;height:32px;background:linear-gradient(#c9c9c9,#e2e2e2);border-radius:2px 0 0 2px;box-shadow:0 1px 0 rgba(0,0,0,.45), inset 0 0 0 1px rgba(235,235,235,.7)"></div>
<div class="ddb" style="left:1412px;top:1546px;width:34px;height:32px"></div>
<div class="tx" style="left:813.0px;top:1545.5px;font:16px &quot;Liberation Sans&quot;;line-height:30px;color:#111;letter-spacing:0.6px;transform:scaleX(1.1254);transform-origin:0 0;">Microsoft Sound Mapper - Input</div>
<div class="a" style="left:428px;top:1589px;width:1066px;height:2px;background:#2c2c2f"></div>
<div class="tx" style="left:443.6px;top:1598.4px;font:16px &quot;Liberation Sans&quot;;line-height:30px;color:#f0f0f0;letter-spacing:0.6px;transform:scaleX(1.1162);transform-origin:0 0;">Sensivity</div>
<div class="a" style="left:1301px;top:1617px;width:15px;height:3px;background:#c9c9c9"></div>
<div class="a" style="left:1426px;top:1617px;width:15px;height:3px;background:#c9c9c9"></div>
<div class="a" style="left:1432px;top:1611px;width:3px;height:15px;background:#c9c9c9"></div>
<div class="a" style="left:1324px;top:1603px;width:96px;height:32px;background:linear-gradient(#c9c9c9,#e2e2e2);border-radius:2px;box-shadow:0 1px 0 rgba(0,0,0,.45), inset 0 0 0 1px rgba(235,235,235,.7)"></div>
<div class="tx" style="left:1329.0px;top:1603.0px;font:18px &quot;Liberation Sans&quot;;line-height:30px;color:#111;letter-spacing:0px;">0</div>
<div class="a" style="left:428px;top:1648px;width:1066px;height:2px;background:#2c2c2f"></div>
<svg class="a" style="left:948.5px;top:1652.5px" width="26" height="26" viewBox="0 0 26 26"><circle cx="13" cy="13" r="11.7" fill="#8a8a8a" stroke="#5a5a5a" stroke-width="0.6"/><path d="M5.5 13 H20.5 M13 5.5 V20.5" stroke="#262626" stroke-width="2.8"/></svg>
<svg class="a" style="left:416px;top:1697px;overflow:visible" width="1153" height="72" viewBox="0 0 1153 72"><path d="M0 0 H1125 L1149 36.0 L1129 72 H0 Z" fill="#333333" style="filter:drop-shadow(0 0 1.5px rgba(0,0,0,.35))"/></svg>
<svg class="a" style="left:978.5px;top:1721.5px" width="26" height="26" viewBox="0 0 26 26"><circle cx="13" cy="13" r="11.7" fill="#8a8a8a" stroke="#5a5a5a" stroke-width="0.6"/><path d="M5.5 13 H20.5 M13 5.5 V20.5" stroke="#262626" stroke-width="2.8"/></svg>
<div class="a" style="left:0px;top:1847px;width:1918px;height:2px;background:#262626"></div>
<div class="a" style="left:920px;top:1792px;width:224px;height:40px;background:#fcfcfc;border-radius:5px;box-shadow:0 1px 1px rgba(0,0,0,.25)"></div>
<div class="tx" style="left:996.2px;top:1797.2px;font:16px &quot;Liberation Sans&quot;;line-height:30px;color:#252525;letter-spacing:0.6px;transform:scaleX(1.1344);transform-origin:0 0;">Remove</div>
<div class="a" style="left:1406px;top:1792px;width:224px;height:40px;background:#f6f6f6;border-radius:5px;box-shadow:0 1px 1px rgba(0,0,0,.25)"></div>
<div class="tx" style="left:1497.0px;top:1795.5px;font:16px &quot;Liberation Sans&quot;;line-height:30px;color:#3c3c3c;letter-spacing:0.6px;transform:scaleX(0.981);transform-origin:0 0;">Apply</div>
<div class="a" style="left:1664px;top:1792px;width:224px;height:40px;background:#f6f6f6;border-radius:5px;box-shadow:0 1px 1px rgba(0,0,0,.25)"></div>
<div class="tx" style="left:1747.8px;top:1796.8px;font:16px &quot;Liberation Sans&quot;;line-height:30px;color:#3c3c3c;letter-spacing:0.6px;transform:scaleX(1.0843);transform-origin:0 0;">Cancel</div>
</body></html>
